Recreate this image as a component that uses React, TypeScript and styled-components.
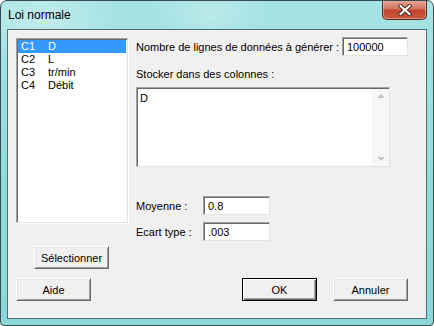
import React from "react";
import styled, { createGlobalStyle } from "styled-components";

const Global = createGlobalStyle`
  html, body { margin: 0; padding: 0; background: #ffffff; }
  body { font-family: "Liberation Sans", Arial, sans-serif; font-size: 11px; }
  * { box-sizing: border-box; }
`;

const Window = styled.div`
  width: 434px;
  height: 326px;
  border: 1px solid #3a4c52;
  border-radius: 7px 7px 4px 4px;
  background:
    radial-gradient(ellipse 60px 30px at 210px 14px, rgba(255,255,255,0.25), transparent),
    radial-gradient(ellipse 80px 40px at 40px 20px, rgba(255,255,255,0.35), transparent),
    linear-gradient(180deg, #a6e3e4 0%, #8fdadb 60%, #8ad8d9 100%);
  display: flex;
  flex-direction: column;
  overflow: hidden;
`;

const TitleBar = styled.div`
  height: 28px;
  display: flex;
  align-items: flex-start;
  justify-content: space-between;
  padding-left: 7px;
  padding-right: 6px;
`;

const Title = styled.span`
  font-family: "Liberation Sans", Arial, sans-serif;
  font-size: 12px;
  color: #000;
  margin-top: 7px;
`;

const CloseBtn = styled.div`
  width: 45px;
  height: 20px;
  margin-top: -1px;
  border: 1px solid #5a2a22;
  border-top: none;
  border-radius: 0 0 5px 5px;
  background: linear-gradient(180deg, #e9a99a 0%, #d27562 45%, #c2442e 55%, #c95a3e 100%);
  box-shadow: inset 0 0 0 1px rgba(255,255,255,0.35);
  display: flex;
  align-items: center;
  justify-content: center;
`;

const Client = styled.div`
  margin: 0 6px 6px 6px;
  flex: 1;
  border: 1px solid #4f6f73;
  background: #f0f0f0;
  padding: 8px 0 0 8px;
  display: flex;
  flex-direction: column;
`;

const Top = styled.div`
  display: flex;
  gap: 8px;
`;

const LeftCol = styled.div`
  display: flex;
  flex-direction: column;
  width: 112px;
`;

const ListBox = styled.div`
  width: 112px;
  height: 185px;
  background: #fff;
  border-top: 1px solid #a0a0a0;
  border-left: 1px solid #a0a0a0;
  border-right: 1px solid #e3e3e3;
  border-bottom: 1px solid #e3e3e3;
  box-shadow: inset 1px 1px 0 #696969, 1px 1px 0 #ffffff;
  padding: 1px 1px 0 1px;
`;

const ListRow = styled.div<{ $sel?: boolean }>`
  height: 13px;
  display: flex;
  align-items: center;
  padding-left: 3px;
  line-height: 13px;
  background: ${(p) => (p.$sel ? "#3399ff" : "transparent")};
  color: ${(p) => (p.$sel ? "#ffffff" : "#000000")};
`;

const ColId = styled.span`
  width: 27px;
`;

const Button = styled.div<{ $default?: boolean }>`
  width: 75px;
  height: 23px;
  display: flex;
  align-items: center;
  justify-content: center;
  background: #f0f0f0;
  color: #000;
  border: 1px solid ${(p) => (p.$default ? "#000" : "#696969")};
  border-top-color: ${(p) => (p.$default ? "#000" : "#ffffff")};
  border-left-color: ${(p) => (p.$default ? "#000" : "#ffffff")};
  box-shadow: ${(p) =>
    p.$default
      ? "inset 1px 1px 0 #ffffff, inset -1px -1px 0 #696969, inset -2px -2px 0 #a0a0a0"
      : "inset 1px 1px 0 #e3e3e3, inset -1px -1px 0 #a0a0a0"};
`;

const SelectBtnWrap = styled.div`
  margin-top: 23px;
  margin-left: 18px;
`;

const RightCol = styled.div`
  flex: 1;
  display: flex;
  flex-direction: column;
`;

const Row = styled.div<{ $mt: number }>`
  display: flex;
  align-items: center;
  margin-top: ${(p) => p.$mt}px;
`;

const Label = styled.span<{ $w?: number; $mt?: number }>`
  color: #000;
  white-space: nowrap;
  ${(p) => (p.$w ? `width: ${p.$w}px;` : "")}
  ${(p) => (p.$mt ? `margin-top: ${p.$mt}px;` : "")}
`;

const TextInput = styled.div<{ $w: number }>`
  width: ${(p) => p.$w}px;
  height: 19px;
  background: #fff;
  border-top: 1px solid #a0a0a0;
  border-left: 1px solid #a0a0a0;
  border-right: 1px solid #e3e3e3;
  border-bottom: 1px solid #e3e3e3;
  box-shadow: inset 1px 1px 0 #696969;
  padding: 3px 0 0 4px;
  line-height: 13px;
  color: #000;
`;

const TextArea = styled.div`
  width: 254px;
  height: 80px;
  margin-top: 7px;
  background: #fff;
  border-top: 1px solid #a0a0a0;
  border-left: 1px solid #a0a0a0;
  border-right: 1px solid #e3e3e3;
  border-bottom: 1px solid #e3e3e3;
  box-shadow: inset 1px 1px 0 #696969;
  display: flex;
`;

const AreaText = styled.div`
  flex: 1;
  padding: 4px 0 0 3px;
  line-height: 13px;
  color: #000;
`;

const ScrollBar = styled.div`
  width: 17px;
  margin: 1px 0 0 0;
  background: #f7f7f7;
  display: flex;
  flex-direction: column;
  justify-content: space-between;
  align-items: center;
  padding: 5px 0 5px 0;
`;

const Arrow = styled.div<{ $down?: boolean }>`
  width: 0;
  height: 0;
  border-left: 4px solid transparent;
  border-right: 4px solid transparent;
  ${(p) =>
    p.$down
      ? "border-top: 4px solid #c6c6c6;"
      : "border-bottom: 4px solid #c6c6c6;"}
`;

const Bottom = styled.div`
  display: flex;
  margin-top: 9px;
`;

const Spacer = styled.div`
  flex: 1;
`;

const ButtonGap = styled.div<{ $w: number }>`
  width: ${(p) => p.$w}px;
`;

export default function App() {
  return (
    <>
      <Global />
      <Window>
        <TitleBar>
          <Title>Loi normale</Title>
          <CloseBtn>
            <svg width="14" height="12" viewBox="0 0 14 12">
              <path
                d="M2.5 2 L11.5 10 M11.5 2 L2.5 10"
                stroke="#4a2420"
                strokeWidth="4"
                strokeLinecap="square"
              />
              <path
                d="M2.5 2 L11.5 10 M11.5 2 L2.5 10"
                stroke="#ffffff"
                strokeWidth="2.2"
                strokeLinecap="square"
              />
            </svg>
          </CloseBtn>
        </TitleBar>
        <Client>
          <Top>
            <LeftCol>
              <ListBox>
                <ListRow $sel>
                  <ColId>C1</ColId>D
                </ListRow>
                <ListRow>
                  <ColId>C2</ColId>L
                </ListRow>
                <ListRow>
                  <ColId>C3</ColId>tr/min
                </ListRow>
                <ListRow>
                  <ColId>C4</ColId>Débit
                </ListRow>
              </ListBox>
              <SelectBtnWrap>
                <Button>Sélectionner</Button>
              </SelectBtnWrap>
            </LeftCol>
            <RightCol>
              <Row $mt={-1}>
                <Label $w={206}>Nombre de lignes de données à générer :</Label>
                <TextInput $w={66}>100000</TextInput>
              </Row>
              <Label $mt={12}>Stocker dans des colonnes :</Label>
              <TextArea>
                <AreaText>D</AreaText>
                <ScrollBar>
                  <Arrow />
                  <Arrow $down />
                </ScrollBar>
              </TextArea>
              <Row $mt={29}>
                <Label $w={67}>Moyenne :</Label>
                <TextInput $w={67}>0.8</TextInput>
              </Row>
              <Row $mt={7}>
                <Label $w={67}>Ecart type :</Label>
                <TextInput $w={67}>.003</TextInput>
              </Row>
            </RightCol>
          </Top>
          <Bottom>
            <Button>Aide</Button>
            <Spacer />
            <Button $default>OK</Button>
            <ButtonGap $w={16} />
            <Button>Annuler</Button>
            <ButtonGap $w={18} />
          </Bottom>
        </Client>
      </Window>
    </>
  );
}
